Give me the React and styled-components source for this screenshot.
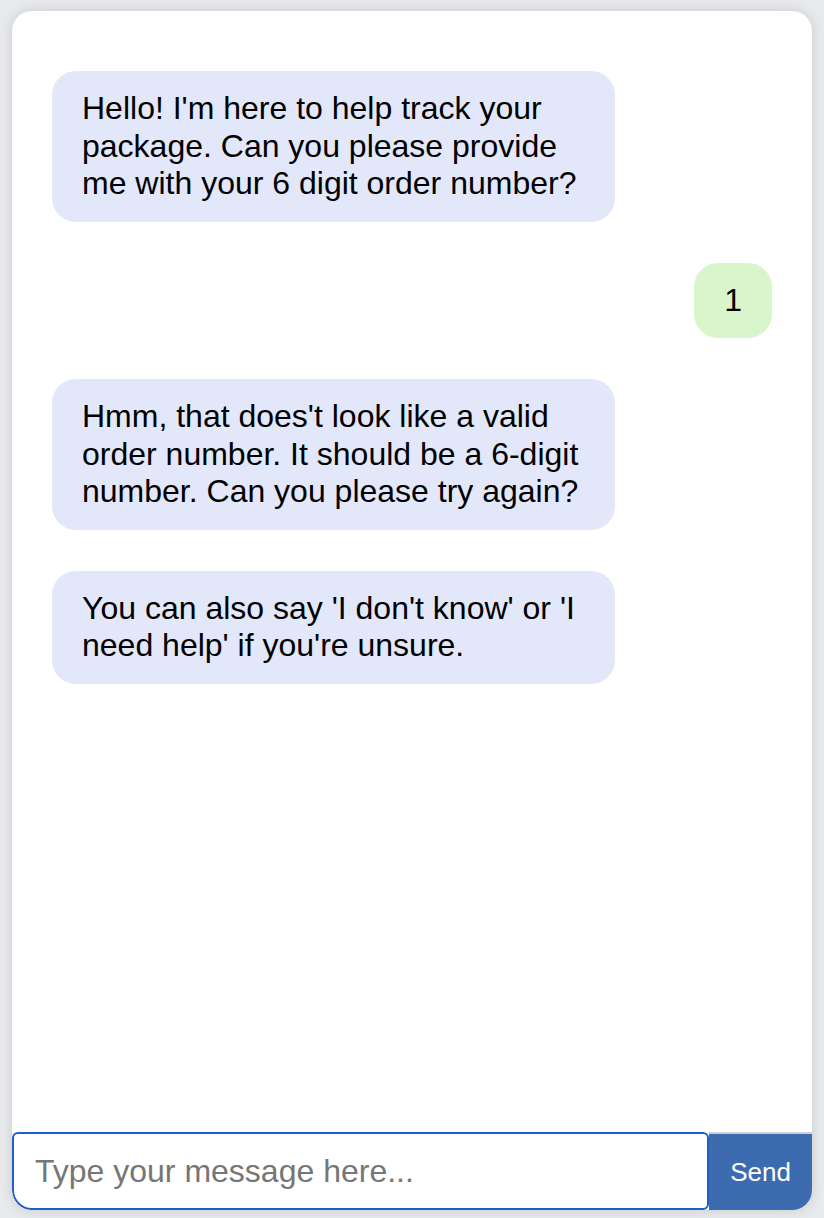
import React, { useEffect, useRef } from "react";
import styled, { createGlobalStyle } from "styled-components";

const GlobalStyle = createGlobalStyle`
  html, body {
    margin: 0;
    padding: 0;
    background: #e8eaee;
  }
  body {
    padding: 11px 12px 8px;
    font-family: "Liberation Sans", Arial, sans-serif;
  }
`;

const Card = styled.div`
  height: 1199px;
  background: #fff;
  border-radius: 20px;
  box-shadow: 0 0 14px rgba(0, 0, 0, 0.14);
  overflow: hidden;
  display: flex;
  flex-direction: column;
`;

const Messages = styled.div`
  flex: 1;
  display: flex;
  flex-direction: column;
  gap: 41px;
  padding: 60px 40px;
  overflow-y: auto;
`;

const Bubble = styled.div`
  align-self: ${(props) => (props.$user ? "flex-end" : "flex-start")};
  max-width: 503px;
  padding: 19px 30px;
  border-radius: 24px;
  background: ${(props) => (props.$user ? "#d9f5cb" : "#e2e7fa")};
  color: #000;
  font-family: "Liberation Sans", Arial, sans-serif;
  font-size: 32px;
  line-height: 37.5px;
`;

const InputRow = styled.form`
  display: flex;
  height: 78px;
`;

const TextInput = styled.input`
  flex: 1;
  min-width: 0;
  box-sizing: border-box;
  height: 100%;
  margin: 0;
  padding: 0 21px;
  border: 2px solid #1f5ec7;
  border-radius: 6px 6px 6px 20px;
  outline: none;
  font-family: "Liberation Sans", Arial, sans-serif;
  font-size: 32px;
  color: #000;
  caret-color: #000;

  &::placeholder {
    color: #767676;
  }
`;

const SendButton = styled.button`
  width: 103px;
  height: 100%;
  margin: 0;
  border: none;
  border-top: 2px solid #cfcfcf;
  background: #3c6caf;
  color: #fff;
  font-family: "Liberation Sans", Arial, sans-serif;
  font-size: 26px;
  cursor: pointer;
`;

const messages = [
  {
    user: false,
    text: "Hello! I'm here to help track your package. Can you please provide me with your 6 digit order number?",
  },
  { user: true, text: "1" },
  {
    user: false,
    text: "Hmm, that does't look like a valid order number. It should be a 6-digit number. Can you please try again?",
  },
  {
    user: false,
    text: "You can also say 'I don't know' or 'I need help' if you're unsure.",
  },
];

export default function App() {
  const inputRef = useRef(null);

  useEffect(() => {
    if (inputRef.current) inputRef.current.focus();
  }, []);

  return (
    <>
      <GlobalStyle />
      <Card>
        <Messages>
          {messages.map((msg, index) => (
            <Bubble key={index} $user={msg.user}>
              {msg.text}
            </Bubble>
          ))}
        </Messages>
        <InputRow onSubmit={(e) => e.preventDefault()}>
          <TextInput ref={inputRef} placeholder="Type your message here..." />
          <SendButton type="submit">Send</SendButton>
        </InputRow>
      </Card>
    </>
  );
}
